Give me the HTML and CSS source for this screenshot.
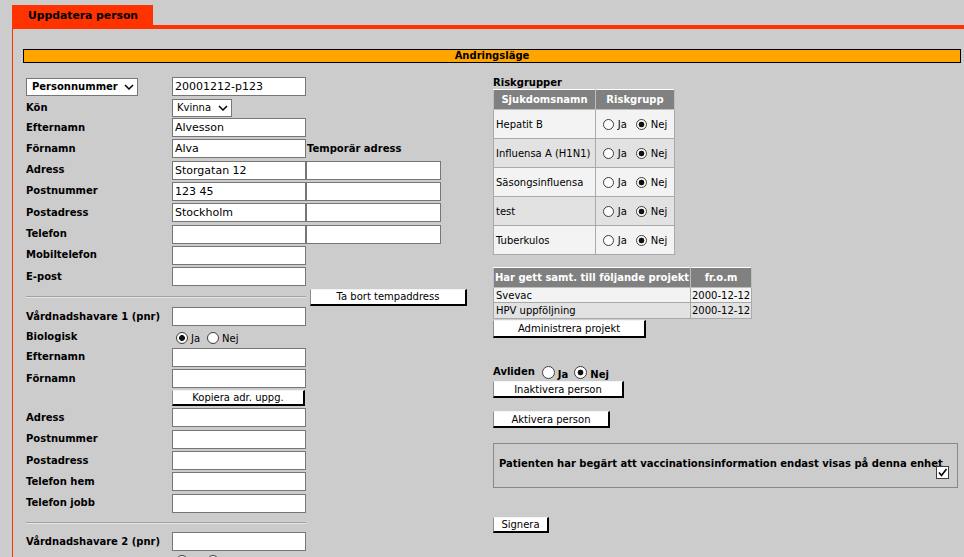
FILE: index.html
```html
<!DOCTYPE html>
<html lang="sv">
<head>
<meta charset="utf-8">
<title>Uppdatera person</title>
<link rel="stylesheet" href="styles.css">
</head>
<body>
<div class="tabs"><div class="tab">Uppdatera person</div></div>
<div class="frame">
  <div class="modebar">Ändringsläge</div>
  <div class="content">
    <div class="leftcol">
      <div class="row r-first">
        <div class="select sel-pnr"><span class="bold">Personnummer</span><svg class="chev" width="10" height="6" viewBox="0 0 10 6"><path d="M1 1 L5 5 L9 1" fill="none" stroke="#000" stroke-width="1.5"/></svg></div>
        <input class="inp" type="text" value="20001212-p123">
      </div>
      <div class="row r-kon">
        <div class="lbl">Kön</div>
        <div class="select sel-kon"><span>Kvinna</span><svg class="chev" width="10" height="6" viewBox="0 0 10 6"><path d="M1 1 L5 5 L9 1" fill="none" stroke="#000" stroke-width="1.5"/></svg></div>
      </div>
      <div class="row"><div class="lbl">Efternamn</div><input class="inp" type="text" value="Alvesson"></div>
      <div class="row"><div class="lbl">Förnamn</div><input class="inp" type="text" value="Alva"><div class="lbl tmp-lbl">Temporär adress</div></div>
      <div class="row"><div class="lbl">Adress</div><input class="inp" type="text" value="Storgatan 12"><input class="inp wide" type="text"></div>
      <div class="row"><div class="lbl">Postnummer</div><input class="inp" type="text" value="123 45"><input class="inp wide" type="text"></div>
      <div class="row"><div class="lbl">Postadress</div><input class="inp" type="text" value="Stockholm"><input class="inp wide" type="text"></div>
      <div class="row"><div class="lbl">Telefon</div><input class="inp" type="text"><input class="inp wide" type="text"></div>
      <div class="row"><div class="lbl">Mobiltelefon</div><input class="inp" type="text"></div>
      <div class="row"><div class="lbl">E-post</div><input class="inp" type="text"></div>
      <div class="row r-sep"><div class="hr"></div><button class="btn btn-tabort">Ta bort tempaddress</button></div>
      <div class="row"><div class="lbl">Vårdnadshavare 1 (pnr)</div><input class="inp" type="text"></div>
      <div class="row r-short">
        <div class="lbl">Biologisk</div>
        <div class="radios"><input class="radio" type="radio" name="bio1" checked><span class="rtxt">Ja</span><input class="radio r2" type="radio" name="bio1"><span class="rtxt">Nej</span></div>
      </div>
      <div class="row"><div class="lbl">Efternamn</div><input class="inp" type="text"></div>
      <div class="row"><div class="lbl">Förnamn</div><input class="inp" type="text"></div>
      <div class="row r-btn"><div></div><button class="btn btn-kopiera">Kopiera adr. uppg.</button></div>
      <div class="row"><div class="lbl">Adress</div><input class="inp" type="text"></div>
      <div class="row"><div class="lbl">Postnummer</div><input class="inp" type="text"></div>
      <div class="row"><div class="lbl">Postadress</div><input class="inp" type="text"></div>
      <div class="row"><div class="lbl">Telefon hem</div><input class="inp" type="text"></div>
      <div class="row"><div class="lbl">Telefon jobb</div><input class="inp" type="text"></div>
      <div class="row r-sep2"><div class="hr"></div></div>
      <div class="row"><div class="lbl">Vårdnadshavare 2 (pnr)</div><input class="inp" type="text"></div>
      <div class="row r-short r-last">
        <div class="lbl">Biologisk</div>
        <div class="radios"><input class="radio" type="radio" name="bio2"><span class="rtxt">Ja</span><input class="radio r2" type="radio" name="bio2"><span class="rtxt">Nej</span></div>
      </div>
    </div>

    <div class="rightcol">
      <div class="caption">Riskgrupper</div>
      <table class="risk">
        <tr><th class="c-name">Sjukdomsnamn</th><th>Riskgrupp</th></tr>
        <tr class="odd"><td class="name">Hepatit B</td><td class="rg"><span class="rgwrap"><input class="radio sm" type="radio" name="rg1"><span class="rtxt">Ja</span><input class="radio sm r2" type="radio" name="rg1" checked><span class="rtxt">Nej</span></span></td></tr>
        <tr class="even"><td class="name">Influensa A (H1N1)</td><td class="rg"><span class="rgwrap"><input class="radio sm" type="radio" name="rg2"><span class="rtxt">Ja</span><input class="radio sm r2" type="radio" name="rg2" checked><span class="rtxt">Nej</span></span></td></tr>
        <tr class="odd"><td class="name">Säsongsinfluensa</td><td class="rg"><span class="rgwrap"><input class="radio sm" type="radio" name="rg3"><span class="rtxt">Ja</span><input class="radio sm r2" type="radio" name="rg3" checked><span class="rtxt">Nej</span></span></td></tr>
        <tr class="even"><td class="name">test</td><td class="rg"><span class="rgwrap"><input class="radio sm" type="radio" name="rg4"><span class="rtxt">Ja</span><input class="radio sm r2" type="radio" name="rg4" checked><span class="rtxt">Nej</span></span></td></tr>
        <tr class="odd"><td class="name">Tuberkulos</td><td class="rg"><span class="rgwrap"><input class="radio sm" type="radio" name="rg5"><span class="rtxt">Ja</span><input class="radio sm r2" type="radio" name="rg5" checked><span class="rtxt">Nej</span></span></td></tr>
      </table>

      <table class="proj">
        <tr><th class="c-proj">Har gett samt. till följande projekt</th><th>fr.o.m</th></tr>
        <tr class="odd p1"><td class="pname">Svevac</td><td class="pdate">2000-12-12</td></tr>
        <tr class="even p2"><td class="pname">HPV uppföljning</td><td class="pdate">2000-12-12</td></tr>
      </table>
      <button class="btn btn-admin">Administrera projekt</button>

      <div class="avliden">
        <span class="lbl av-lbl">Avliden</span>
        <input class="radio big" type="radio" name="avl"><span class="av-txt">Ja</span>
        <input class="radio big r2" type="radio" name="avl" checked><span class="av-txt">Nej</span>
      </div>
      <button class="btn btn-inakt">Inaktivera person</button>
      <button class="btn btn-akt">Aktivera person</button>

      <div class="notice">
        <span class="notice-text">Patienten har begärt att vaccinationsinformation endast visas på denna enhet</span>
        <span class="cb"><svg width="11" height="11" viewBox="0 0 11 11"><path d="M2 5.5 L4.5 8.5 L9.5 2" fill="none" stroke="#000" stroke-width="1.6"/></svg></span>
      </div>

      <button class="btn btn-sign">Signera</button>
    </div>
  </div>
</div>
</body>
</html>
```

FILE: styles.css
```css
html { overflow: hidden; }
body {
  margin: 0;
  background: #cccccc;
  font-family: "DejaVu Sans", Verdana, sans-serif;
  font-size: 10px;
  color: #000;
}
.bold { font-weight: bold; }

.tabs { display: flex; padding: 5px 0 0 12px; }
.tab {
  width: 141px; height: 20px; box-sizing: border-box;
  background: #ff3300; font-weight: bold; font-size: 10.8px;
  line-height: 21px; padding-left: 16px;
}
.frame {
  margin-left: 12px;
  border-top: 4px solid #ff3300;
  border-left: 1px solid #ff3300;
  min-height: 620px;
}
.modebar {
  margin: 20px 3px 0 10px; height: 14px; box-sizing: border-box;
  border: 1px solid #000; background: #ffa500;
  font-weight: bold; text-align: center; line-height: 12px;
}
.content { display: flex; gap: 26px; padding: 14px 0 0 13px; }

/* left form */
.leftcol { width: 441px; flex: none; }
.row {
  display: grid; grid-template-columns: 146px 134px 135px;
  height: 19px; margin-bottom: 2.33px; align-items: center;
}
.r-first { margin-bottom: 2px; }
.r-kon { margin-bottom: 1px; }
.r-sep { height: 17px; margin-bottom: 1.4px; }
.r-sep2 { height: 15px; margin-bottom: 2px; }
.r-short { height: 17px; }
.r-btn { height: 16px; margin-top: -0.3px; }
.r-last { align-items: start; }
.lbl { font-weight: bold; line-height: 12px; white-space: nowrap; }
.r-last .lbl { padding-top: 5px; }
.r-last .radios { align-items: flex-start; padding-top: 2px; height: auto; }
.r-last .rtxt { margin-top: 3px; }
.tmp-lbl { padding-left: 1px; }
.inp {
  width: 134px; height: 19px; box-sizing: border-box; margin: 0;
  border: 1px solid #767676; background: #fff; padding: 0 2px;
  font: 11px "DejaVu Sans", Verdana, sans-serif; color: #000;
}
.inp.wide { width: 135px; }
.select {
  display: flex; align-items: center; justify-content: space-between;
  height: 18px; box-sizing: border-box; border: 1px solid #767676;
  background: #fff; padding: 0 3px 0 5px; line-height: 12px;
}
.sel-pnr { width: 112px; }
.sel-kon { width: 60px; padding-left: 4px; }
.chev { display: block; }
.hr {
  grid-column: 1 / 3; height: 0;
  border-top: 1px solid #a3a3a3; border-bottom: 1px solid #e4e4e4;
}
.radios { display: flex; align-items: flex-end; padding-left: 4px; height: 14px; }
.radio {
  appearance: none; -webkit-appearance: none; margin: 0;
  width: 12px; height: 12px; box-sizing: border-box; flex: none;
  border: 1px solid #3c3c3c; border-radius: 50%; background: #fff;
}
.radio:checked { background: radial-gradient(circle, #111 0 2.6px, #fff 3.2px); }
.radio.big { width: 13px; height: 13px; }
.rtxt { margin-left: 3px; line-height: 11px; }
.radios .r2 { margin-left: 7px; }

/* buttons */
.btn {
  display: block; margin: 0; padding: 0; box-sizing: border-box;
  height: 17px; background: #fff; color: #000;
  font: 10px "DejaVu Sans", Verdana, sans-serif; line-height: 13px;
  border-style: solid; border-width: 1px 2px 2px 1px;
  border-color: #f4f4f4 #000 #000 #8c8c8c; text-align: center;
}
.btn-tabort { width: 157px; margin-left: 4px; }
.btn-kopiera { width: 133px; height: 16px; line-height: 12px; }
.btn-admin { width: 153px; height: 18px; line-height: 14px; margin-top: 1px; }
.btn-inakt { width: 131px; margin-top: 1px; }
.btn-akt { width: 117px; margin-top: 13px; }
.btn-sign { width: 56px; height: 16px; line-height: 12px; margin-top: 29px; }

/* right column */
.rightcol { width: 465px; flex: none; }
.caption { font-weight: bold; line-height: 12px; }
table { border-collapse: collapse; border-spacing: 0; }
th {
  background: #808080; color: #fff; font-weight: bold;
  padding: 0; height: 19px; text-align: center;
  border: 1px solid #bdbdbd; border-top-color: #fff;
}
td { padding: 0; border: 1px solid #a9a9a9; }
.odd td { background: #f3f3f3; }
.even td { background: #e2e2e2; }
.risk { width: 182px; }
.risk .c-name { width: 101px; }
.risk td { height: 28px; }
.name { padding-left: 2px; }
.rg { text-align: center; }
.rgwrap { display: inline-flex; align-items: flex-end; padding-top: 3px; }
.radio.sm { width: 11px; height: 11px; }
.rgwrap .r2 { margin-left: 9px; }
.rgwrap .rtxt { margin-left: 4px; }

.proj { width: 259px; margin-top: 12px; }
.proj .c-proj { width: 196px; }
.p1 td { height: 14px; }
.p2 td { height: 15px; }
.pname { padding-left: 2px; }
.pdate { padding-left: 1px; }

.avliden { display: flex; align-items: flex-start; height: 17px; margin-top: 25px; }
.av-lbl { margin-top: 3px; margin-right: 7px; }
.avliden .radio { margin-top: 3px; }
.av-txt { font-weight: bold; line-height: 12px; margin-top: 6px; margin-left: 3px; margin-right: 6px; }
.avliden .r2 { margin-left: 0; }

.notice {
  margin-top: 15px; width: 465px; height: 45px; box-sizing: border-box;
  border: 1px solid #888; display: flex; justify-content: space-between;
  align-items: flex-start; padding: 0 8px 0 5px;
}
.notice-text { font-weight: bold; line-height: 12px; margin-top: 14px; white-space: nowrap; min-width: 0; }
.cb {
  flex: none; margin-top: 22px; width: 13px; height: 13px; box-sizing: border-box;
  border: 1px solid #3c3c3c; background: #fff; display: flex; align-items: center; justify-content: center;
}
.cb svg { display: block; }
```
